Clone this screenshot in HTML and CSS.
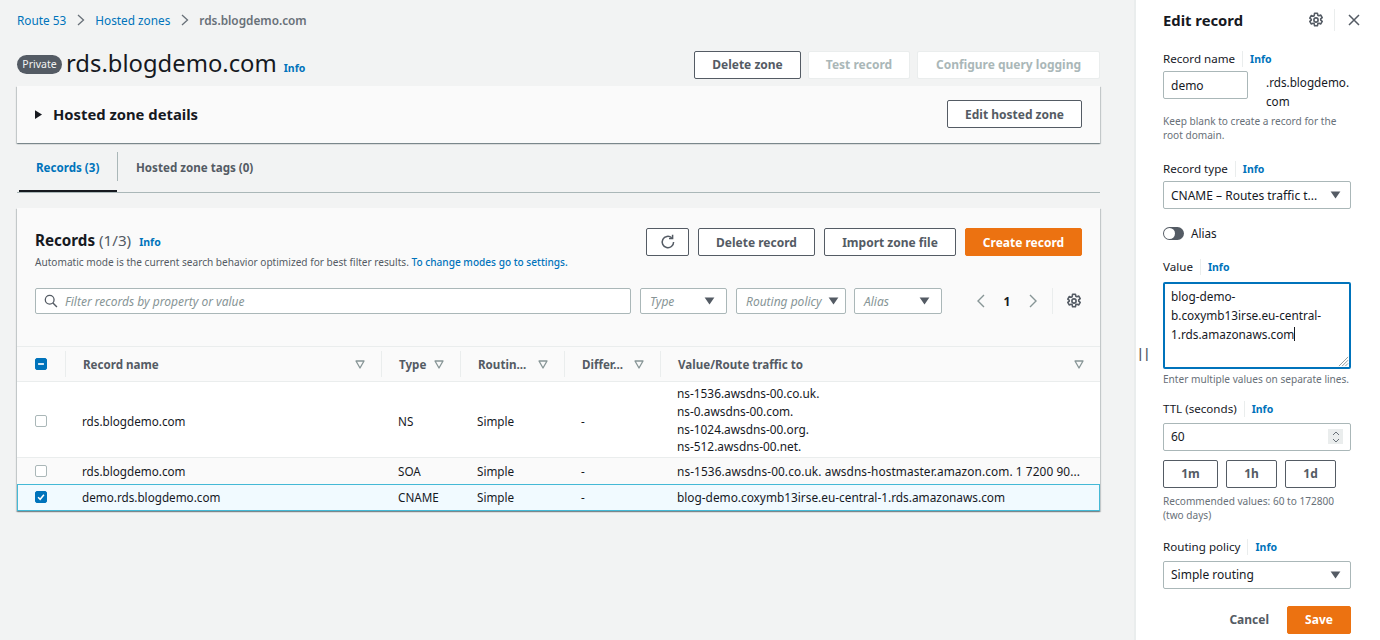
FILE: index.html
```html
<!DOCTYPE html>
<html lang="en">
<head>
<meta charset="utf-8">
<title>rds.blogdemo.com</title>
<link rel="stylesheet" href="styles.css">
</head>
<body>
<svg class="defs" width="0" height="0" aria-hidden="true">
  <defs>
    <symbol id="gear" viewBox="0 0 16 16">
      <path d="M6.6 1.2h2.8l.4 2 1.1.6 1.9-.7 1.4 2.5-1.5 1.3v1.2l1.5 1.3-1.4 2.5-1.9-.7-1.1.6-.4 2H6.6l-.4-2-1.1-.6-1.9.7-1.4-2.5 1.5-1.3V7.4L1.8 6.1l1.4-2.5 1.9.7 1.1-.6z" fill="none" stroke="currentColor" stroke-width="1.6" stroke-linejoin="round"/>
      <circle cx="8" cy="8" r="2.1" fill="none" stroke="currentColor" stroke-width="1.6"/>
    </symbol>
    <symbol id="filt" viewBox="0 0 10 9">
      <path d="M1 1h8L5 8z" fill="none" stroke="currentColor" stroke-width="1.3" stroke-linejoin="round"/>
    </symbol>
    <symbol id="caret" viewBox="0 0 12 9">
      <path d="M0.5 0.5h11L6 8.5z" fill="currentColor"/>
    </symbol>
  </defs>
</svg>
<div class="app">
  <main class="main">
    <nav class="crumbs">
      <a class="link">Route 53</a>
      <svg class="crumb-sep" viewBox="0 0 8 12"><path d="M1 1l5.5 5L1 11" fill="none" stroke="currentColor" stroke-width="1.3"/></svg>
      <a class="link">Hosted zones</a>
      <svg class="crumb-sep" viewBox="0 0 8 12"><path d="M1 1l5.5 5L1 11" fill="none" stroke="currentColor" stroke-width="1.3"/></svg>
      <span class="crumb-cur">rds.blogdemo.com</span>
    </nav>

    <header class="page-head">
      <span class="badge">Private</span>
      <h1 class="zone-title">rds.blogdemo.com</h1>
      <a class="info info-title">Info</a>
      <div class="spacer"></div>
      <button class="btn btn-delzone">Delete zone</button>
      <button class="btn btn-disabled btn-test">Test record</button>
      <button class="btn btn-disabled btn-logging">Configure query logging</button>
    </header>

    <section class="card details">
      <svg class="tri" viewBox="0 0 8 10"><path d="M0 0l8 5-8 5z" fill="currentColor"/></svg>
      <h2 class="details-title">Hosted zone details</h2>
      <div class="spacer"></div>
      <button class="btn btn-editzone">Edit hosted zone</button>
    </section>

    <div class="tabs">
      <div class="tab tab-active">Records (3)</div>
      <div class="tab-divider"></div>
      <div class="tab tab-other">Hosted zone tags (0)</div>
    </div>

    <section class="card records">
      <div class="rec-head">
        <div class="rec-titles">
          <div class="rec-title-row">
            <h2 class="rec-title">Records <span class="rec-count">(1/3)</span></h2>
            <a class="info">Info</a>
          </div>
          <p class="rec-desc">Automatic mode is the current search behavior optimized for best filter results. <a class="link rec-link">To change modes go to settings.</a></p>
        </div>
        <div class="rec-actions">
          <button class="btn btn-refresh" aria-label="Refresh"><svg class="ico-refresh" viewBox="0 0 16 16"><path d="M13.6 8a5.7 5.7 0 1 1-1.9-4.2" fill="none" stroke="currentColor" stroke-width="1.5"/><path d="M12.6 .8v3.6H9" fill="none" stroke="currentColor" stroke-width="1.5"/></svg></button>
          <button class="btn btn-delrec">Delete record</button>
          <button class="btn btn-import">Import zone file</button>
          <button class="btn btn-primary btn-create">Create record</button>
        </div>
      </div>

      <div class="filters">
        <div class="filter-input">
          <svg class="ico-search" viewBox="0 0 16 16"><circle cx="6.5" cy="6.5" r="5" fill="none" stroke="currentColor" stroke-width="1.5"/><path d="M10.2 10.2l4.6 4.6" stroke="currentColor" stroke-width="1.6"/></svg>
          <span class="placeholder">Filter records by property or value</span>
        </div>
        <div class="filter-sel sel-type"><span class="placeholder">Type</span><svg class="caret"><use href="#caret"/></svg></div>
        <div class="filter-sel sel-routing"><span class="placeholder">Routing policy</span><svg class="caret"><use href="#caret"/></svg></div>
        <div class="filter-sel sel-alias"><span class="placeholder">Alias</span><svg class="caret"><use href="#caret"/></svg></div>
        <div class="pager">
          <svg class="pg-arrow" viewBox="0 0 10 14"><path d="M8 1L2 7l6 6" fill="none" stroke="currentColor" stroke-width="1.4"/></svg>
          <span class="pg-num">1</span>
          <svg class="pg-arrow" viewBox="0 0 10 14"><path d="M2 1l6 6-6 6" fill="none" stroke="currentColor" stroke-width="1.4"/></svg>
        </div>
        <div class="pref"><svg class="ico-gear"><use href="#gear"/></svg></div>
      </div>

      <div class="table">
        <div class="row row-head">
          <div class="cell c-check"><span class="check check-on"><svg viewBox="0 0 12 12"><path d="M2.5 6h7" stroke="#fff" stroke-width="2"/></svg></span></div>
          <div class="cell c-name th">Record name<svg class="filt"><use href="#filt"/></svg></div>
          <div class="cell c-type th">Type<svg class="filt"><use href="#filt"/></svg></div>
          <div class="cell c-rout th">Routin...<svg class="filt"><use href="#filt"/></svg></div>
          <div class="cell c-diff th">Differ...<svg class="filt"><use href="#filt"/></svg></div>
          <div class="cell c-val th">Value/Route traffic to<svg class="filt"><use href="#filt"/></svg></div>
        </div>
        <div class="row row-ns">
          <div class="cell c-check"><span class="check"></span></div>
          <div class="cell c-name">rds.blogdemo.com</div>
          <div class="cell c-type">NS</div>
          <div class="cell c-rout">Simple</div>
          <div class="cell c-diff">-</div>
          <div class="cell c-val c-lines"><span>ns-1536.awsdns-00.co.uk.</span><span>ns-0.awsdns-00.com.</span><span>ns-1024.awsdns-00.org.</span><span>ns-512.awsdns-00.net.</span></div>
        </div>
        <div class="row row-soa">
          <div class="cell c-check"><span class="check"></span></div>
          <div class="cell c-name">rds.blogdemo.com</div>
          <div class="cell c-type">SOA</div>
          <div class="cell c-rout">Simple</div>
          <div class="cell c-diff">-</div>
          <div class="cell c-val c-soa">ns-1536.awsdns-00.co.uk. awsdns-hostmaster.amazon.com. 1 7200 90...</div>
        </div>
        <div class="row row-sel">
          <div class="cell c-check"><span class="check check-on"><svg viewBox="0 0 12 12"><path d="M2.5 6.2l2.5 2.6 4.5-5.6" fill="none" stroke="#fff" stroke-width="1.8"/></svg></span></div>
          <div class="cell c-name">demo.rds.blogdemo.com</div>
          <div class="cell c-type">CNAME</div>
          <div class="cell c-rout">Simple</div>
          <div class="cell c-diff">-</div>
          <div class="cell c-val">blog-demo.coxymb13irse.eu-central-1.rds.amazonaws.com</div>
        </div>
      </div>
    </section>
  </main>

  <aside class="panel">
    <span class="grip">||</span>
    <div class="panel-head">
      <h2 class="panel-title">Edit record</h2>
      <svg class="ico-gear panel-gear"><use href="#gear"/></svg>
      <span class="panel-div"></span>
      <svg class="ico-close" viewBox="0 0 14 14"><path d="M2 2l10 10M12 2L2 12" stroke="currentColor" stroke-width="1.5"/></svg>
    </div>

    <div class="label-row lbl-name"><span class="label">Record name</span><a class="info">Info</a></div>
    <div class="name-row">
      <div class="input input-name">demo</div>
      <div class="suffix">.rds.blogdemo.<br>com</div>
    </div>
    <p class="hint hint-name">Keep blank to create a record for the root domain.</p>

    <div class="label-row lbl-type"><span class="label">Record type</span><a class="info">Info</a></div>
    <div class="input select">CNAME – Routes traffic t...<svg class="caret"><use href="#caret"/></svg></div>

    <div class="alias-row"><span class="toggle"><span class="knob"></span></span><span class="alias-text">Alias</span></div>

    <div class="label-row lbl-value"><span class="label">Value</span><a class="info">Info</a></div>
    <div class="textarea">blog-demo-<br>b.coxymb13irse.eu-central-<br>1.rds.amazonaws.com<span class="cursor"></span>
      <svg class="resize" viewBox="0 0 12 12"><path d="M11 1L1 11M11 4.5L4.5 11M11 8l-3 3" stroke="#8d9596" stroke-width="1"/></svg>
    </div>
    <p class="hint hint-value">Enter multiple values on separate lines.</p>

    <div class="label-row lbl-ttl"><span class="label">TTL (seconds)</span><a class="info">Info</a></div>
    <div class="input input-ttl">60
      <span class="spin"><svg viewBox="0 0 10 14"><path d="M2 5l3-3 3 3M2 9l3 3 3-3" fill="none" stroke="currentColor" stroke-width="1"/></svg></span>
    </div>
    <div class="ttl-btns">
      <button class="btn btn-ttl t1">1m</button>
      <button class="btn btn-ttl t2">1h</button>
      <button class="btn btn-ttl t3">1d</button>
    </div>
    <p class="hint hint-ttl">Recommended values: 60 to 172800 (two days)</p>

    <div class="label-row lbl-rout"><span class="label">Routing policy</span><a class="info">Info</a></div>
    <div class="input select">Simple routing<svg class="caret"><use href="#caret"/></svg></div>

    <div class="panel-foot">
      <span class="cancel">Cancel</span>
      <button class="btn btn-primary btn-save">Save</button>
    </div>
  </aside>
</div>
</body>
</html>
```

FILE: styles.css
```css
* { box-sizing: border-box; }
html, body { margin: 0; padding: 0; height: 640px; overflow: hidden; }
body { font-family: "Noto Sans", "Open Sans", Arial, sans-serif; font-size: 12px; color: #16191f; background: #f2f3f3; }
.defs { position: absolute; }
h1, h2, p { margin: 0; font-weight: normal; }
a { text-decoration: none; }
button { font-family: inherit; cursor: pointer; }

.app { display: flex; height: 640px; }
.main { width: 1134px; flex: none; padding: 0 34px 0 17px; }
.spacer { flex: 1; }
.link { color: #0073bb; }
.info { color: #0073bb; font-size: 10.5px; font-weight: 700; }

.crumbs { display: flex; align-items: center; height: 40px; font-size: 11.8px; }
.crumb-sep { width: 8px; height: 12px; margin: 0 10px 0 11px; color: #687078; }
.crumb-cur { color: #687078; font-weight: 600; }

.page-head { display: flex; align-items: center; height: 46px; }
.badge { background: #545b64; color: #f2f3f3; font-size: 10.5px; border-radius: 10px; height: 19px; line-height: 18px; padding: 0 4px; width: 45px; text-align: center; margin-right: 4px; margin-top: 2px; }
.zone-title { font-size: 23.8px; line-height: 30px; color: #16191f; }
.info-title { margin: 10px 0 0 7px; }

.btn { background: #fff; border: 1px solid #545b64; border-radius: 2px; color: #545b64; font-weight: 700; font-size: 12px; height: 28px; padding: 0; white-space: nowrap; }
.page-head .btn { margin-top: 3px; }
.btn-disabled { border-color: #eaeded; color: #aab7b8; }
.btn-primary { background: #ec7211; border-color: #ec7211; color: #fff; }
.btn-delzone { width: 107px; }
.btn-test { width: 102px; margin-left: 7px; }
.btn-logging { width: 183px; margin-left: 7px; }

.card { background: #fafafa; box-shadow: 0 1px 1px 0 rgba(0,28,36,.3), 1px 1px 1px 0 rgba(0,28,36,.15), -1px 1px 1px 0 rgba(0,28,36,.15); }
.details { display: flex; align-items: center; height: 57px; padding: 0 18px 1px; }
.tri { width: 7px; height: 9px; margin-right: 11px; color: #16191f; }
.details-title { font-size: 14.8px; font-weight: 700; margin-bottom: 1px; }
.btn-editzone { width: 135px; }

.tabs { display: flex; align-items: center; height: 50px; border-bottom: 1px solid #aab7b8; padding-left: 2px; font-weight: 700; color: #545b64; }
.tab { padding: 0 18px; height: 49px; line-height: 49px; font-size: 11.6px; white-space: nowrap; }
.tab-active { width: 98px; padding: 0 17px; color: #0073bb; border-bottom: 2px solid #16191f; }
.tab-divider { width: 1px; height: 29px; background: #aab7b8; margin-bottom: 2px; }

.records { margin-top: 15px; height: 303px; display: flex; flex-direction: column; }
.rec-head { display: flex; padding: 20px 18px 0; height: 80px; }
.rec-titles { flex: 1; }
.rec-title-row { display: flex; align-items: baseline; height: 26px; padding-top: 2px; }
.rec-title { font-size: 15.2px; font-weight: 700; }
.rec-count { font-weight: 400; color: #545b64; }
.rec-title-row .info { margin-left: 8px; }
.rec-desc { font-size: 10.1px; color: #545b64; line-height: 14px; margin-top: 1px; white-space: nowrap; }
.rec-link { font-weight: 500; }
.rec-actions { display: flex; gap: 9px; }
.btn-refresh { width: 43px; display: flex; align-items: center; justify-content: center; }
.ico-refresh { width: 16px; height: 16px; }
.btn-delrec { width: 117px; }
.btn-import { width: 132px; }
.btn-create { width: 117px; }

.filters { display: flex; align-items: center; height: 26px; padding-left: 18px; }
.filter-input { width: 596px; height: 26px; background: #fff; border: 1px solid #aab7b8; border-radius: 2px; display: flex; align-items: center; padding-left: 8px; }
.ico-search { width: 14px; height: 14px; color: #545b64; margin-right: 7px; }
.placeholder { font-style: italic; color: #879596; font-size: 12px; }
.filter-sel { height: 26px; background: #fff; border: 1px solid #aab7b8; border-radius: 2px; display: flex; align-items: center; justify-content: space-between; padding: 0 11px 0 9px; margin-left: 9px; }
.sel-type { width: 87px; }
.sel-routing { width: 110px; padding-right: 6px; padding-left: 9px; }
.sel-alias { width: 88px; margin-left: 8px; }
.caret { width: 11px; height: 8px; color: #545b64; flex: none; }
.pager { display: flex; align-items: center; margin-left: 34px; }
.pg-arrow { width: 10px; height: 14px; color: #879596; }
.pg-num { width: 42px; text-align: center; font-weight: 700; color: #16191f; font-size: 12px; }
.pref { margin-left: 14px; padding-left: 13px; height: 26px; border-left: 1px solid #eaeded; display: flex; align-items: center; }
.ico-gear { width: 16px; height: 16px; color: #545b64; display: block; }

.table { margin-top: 32px; flex: 1; }
.row { display: grid; grid-template-columns: 48px 316px 79px 104px 96px 1fr; align-items: center; }
.row-head { height: 36px; background: #fafafa; border-top: 1px solid #eaeded; border-bottom: 1px solid #eaeded; }
.cell { padding-left: 17px; white-space: nowrap; overflow: hidden; font-size: 11.7px; }
.c-val { font-size: 11.85px; }
.c-soa { letter-spacing: .09px; }
.c-check { padding-left: 18px; display: flex; align-items: center; }
.th { font-weight: 700; font-size: 11.6px; color: #545b64; display: flex; align-items: center; justify-content: space-between; height: 26px; border-left: 1px solid #eaeded; padding-left: 17px; padding-right: 16px; }
.row-head .c-check { height: 26px; }
.filt { width: 10px; height: 9px; color: #879596; flex: none; }
.row-ns { height: 76px; padding-top: 2px; background: #fff; border-bottom: 1px solid #eaeded; }
.row-soa { height: 26px; background: #fafafa; }
.row-sel { height: 27px; padding-bottom: 1px; background: #f1faff; box-shadow: inset 0 0 0 1px #44b9d6; }
.c-lines { display: flex; flex-direction: column; line-height: 17.6px; }
.check { width: 12px; height: 12px; display: block; background: #fff; border: 1px solid #aab7b8; border-radius: 2px; }
.check-on { background: #0073bb; border-color: #0073bb; }
.check svg { width: 10px; height: 10px; display: block; }

.panel { width: 246px; flex: none; background: #fff; border-left: 2px solid #eaeded; padding: 0 29px 0 27px; position: relative; height: 640px; overflow: hidden; }
.grip { position: absolute; left: 1px; top: 345px; font-size: 12px; color: #545b64; font-weight: 700; }
.panel-head { display: flex; align-items: center; height: 40px; }
.panel-title { font-size: 14.8px; font-weight: 700; flex: 1; }
.panel-gear { color: #545b64; margin-right: 10px; }
.panel-div { width: 1px; height: 22px; background: #eaeded; margin-right: 12px; }
.ico-close { width: 14px; height: 14px; color: #545b64; margin-right: -10px; }

.label-row { display: flex; align-items: center; height: 18px; }
.label { font-size: 11.6px; color: #16191f; padding-right: 7px; margin-right: 7px; border-right: 1px solid #eaeded; line-height: 16px; }
.lbl-name { margin-top: 10px; }
.lbl-type { margin-top: 18px; }
.lbl-value { margin-top: 16px; }
.lbl-ttl { margin-top: 13px; }
.lbl-rout { margin-top: 16px; }

.input { background: #fff; border: 1px solid #aab7b8; border-radius: 2px; height: 28px; padding: 0 7px; display: flex; align-items: center; font-size: 12px; }
.name-row { display: flex; margin-top: 3px; }
.input-name { width: 85px; flex: none; }
.suffix { margin-left: 18px; line-height: 19px; padding-top: 2px; height: 40px; white-space: nowrap; font-size: 11.7px; color: #16191f; }
.hint { font-size: 10.1px; color: #687078; line-height: 13.6px; }
.hint-name { margin-top: 4px; }
.hint-value { margin-top: 4px; }
.hint-ttl { margin-top: 6px; line-height: 14px; }
.select { justify-content: space-between; padding-right: 9px; }
.lbl-type + .select { margin-top: 3px; }
.lbl-rout + .select { margin-top: 5px; }

.alias-row { display: flex; align-items: center; height: 18px; margin-top: 15px; }
.toggle { width: 21px; height: 13px; border-radius: 7px; background: #545b64; position: relative; display: block; margin-right: 7px; }
.knob { position: absolute; left: 1px; top: 1px; width: 11px; height: 11px; border-radius: 50%; background: #fff; }
.alias-text { font-size: 11.7px; color: #16191f; }

.textarea { position: relative; margin-top: 6px; height: 87px; border: 2px solid #0073bb; border-radius: 2px; background: #fff; padding: 3px 6px; line-height: 19px; font-size: 11.8px; }
.cursor { display: inline-block; width: 1px; height: 14px; background: #16191f; vertical-align: -2px; }
.resize { position: absolute; right: 0; bottom: 0; width: 11px; height: 11px; }

.input-ttl { margin-top: 5px; justify-content: space-between; padding-right: 7px; }
.spin { width: 15px; height: 15px; background: #eaeded; color: #687078; display: flex; align-items: center; justify-content: center; }
.spin svg { width: 10px; height: 14px; }
.ttl-btns { display: flex; margin-top: 9px; gap: 8px; }
.t1 { width: 55px; }
.t2 { width: 51px; }
.t3 { width: 51px; }

.panel-foot { display: flex; align-items: center; justify-content: flex-end; margin-top: 17px; }
.cancel { color: #545b64; font-weight: 700; font-size: 12px; margin-right: 18px; }
.btn-save { width: 64px; }
```
